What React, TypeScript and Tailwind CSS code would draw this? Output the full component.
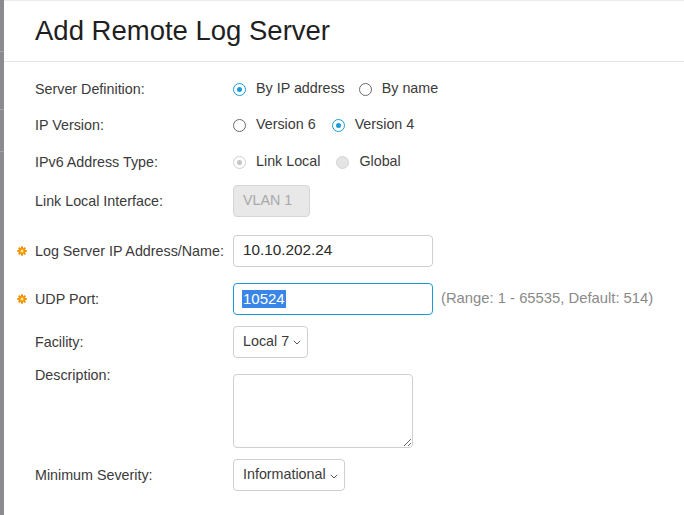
import React from 'react';

const font = { fontFamily: '"Liberation Sans", Arial, sans-serif' };

function Star() {
    return (
        <svg width="10" height="10" viewBox="0 0 10 10" className="block">
            {[0, 45, 90, 135].map(a => (
                <rect key={a} x="4" y="0.2" width="2" height="9.6" rx="0.8" fill="#f08400" transform={`rotate(${a} 5 5)`} />
            ))}
            <circle cx="5" cy="5" r="3.3" fill="#f59a00" />
            <circle cx="5" cy="5" r="1.6" fill="#ffe08a" />
        </svg>
    );
}

function Radio({ checked, disabled, label }: { checked?: boolean; disabled?: boolean; label: string }) {
    const ring = disabled
        ? checked ? 'border-[#cfcfcf] bg-white' : 'border-[#d4d4d4] bg-[#e4e4e4]'
        : checked ? 'border-[#1b9ad6] bg-white' : 'border-[#6b6b6b] bg-white';
    const dot = disabled ? 'bg-[#c4c4c4]' : 'bg-[#1b9ad6]';
    return (
        <div className="flex items-center">
            <div className={`w-[13px] h-[13px] rounded-full border flex items-center justify-center ${ring}`}>
                {checked && <div className={`w-[5px] h-[5px] rounded-full ${dot}`} />}
            </div>
            <span className="ml-[10px] text-[14.3px] text-[#3a3a3a]">{label}</span>
        </div>
    );
}

function Chevron() {
    return (
        <svg width="8" height="5" viewBox="0 0 8 5" className="ml-[4px] mt-[2px]">
            <polyline points="0.8,0.8 4,4 7.2,0.8" fill="none" stroke="#555" strokeWidth="1" />
        </svg>
    );
}

function Row({ label, required, className = '', top, children }: { label: string; required?: boolean; className?: string; top?: boolean; children?: React.ReactNode }) {
    return (
        <div className={`flex ${top ? 'items-start' : 'items-center'} ${className}`}>
            <div className="w-[216px] flex items-center shrink-0 leading-5">
                <div className="w-[18px] flex items-center">{required && <Star />}</div>
                <span className="text-[14.3px] text-[#3a3a3a]">{label}</span>
            </div>
            {children}
        </div>
    );
}

export default function App() {
    return (
        <div className="w-[684px] h-[515px] flex bg-white overflow-hidden" style={font}>
            {/* side strip */}
            <div className="w-[4px] bg-[#8a8a8f] flex flex-col shrink-0">
                <div className="h-[52px] border-b border-[#a4a4a8]" />
                <div className="h-[58px] border-b border-[#a4a4a8]" />
                <div className="h-[42px] border-b border-[#a4a4a8]" />
            </div>

            <div className="flex-1 border-t border-[#ececec]">
                {/* header */}
                <div className="h-[61px] flex items-center border-b border-[#e4e4e4] pl-[31px]">
                    <h1 className="text-[27.5px] text-[#1f1f1f] font-normal">Add Remote Log Server</h1>
                </div>

                <div className="pl-[13px] pt-[10px]">
                    <Row label="Server Definition:" className="h-[34px]">
                        <div className="flex items-center gap-[14px]">
                            <Radio checked label="By IP address" />
                            <Radio label="By name" />
                        </div>
                    </Row>
                    <Row label="IP Version:" className="h-[38px]">
                        <div className="flex items-center gap-[16px]">
                            <Radio label="Version 6" />
                            <Radio checked label="Version 4" />
                        </div>
                    </Row>
                    <Row label="IPv6 Address Type:" className="h-[36px]">
                        <div className="flex items-center gap-[16px]">
                            <Radio checked disabled label="Link Local" />
                            <Radio disabled label="Global" />
                        </div>
                    </Row>
                    <Row label="Link Local Interface:" className="h-[42px]">
                        <div className="w-[77px] h-[32px] rounded-[4px] border border-[#d6d6d6] bg-[#e8e8e8] flex items-center pl-[9px] text-[14.3px] text-[#a9a9a9]">
                            VLAN 1
                        </div>
                    </Row>
                    <Row label="Log Server IP Address/Name:" required className="h-[57px]">
                        <div className="w-[200px] h-[32px] rounded-[4px] border border-[#cfcfcf] flex items-center pl-[9px] text-[15.3px] text-[#2a2a2a]">
                            10.10.202.24
                        </div>
                    </Row>
                    <Row label="UDP Port:" required className="h-[39px]">
                        <div className="w-[200px] h-[32px] rounded-[4px] border border-[#1b9ad6] flex items-center pl-[8px] text-[15px]">
                            <span className="bg-[#3a86e8] text-white leading-[18px] px-[1px]">10524</span>
                        </div>
                        <span className="ml-[8px] text-[14.8px] text-[#8a8a8a]">(Range: 1 - 65535, Default: 514)</span>
                    </Row>
                    <Row label="Facility:" className="h-[47px]">
                        <div className="h-[32px] rounded-[4px] border border-[#cfcfcf] flex items-center pl-[9px] pr-[6px] text-[14.3px] text-[#3a3a3a]">
                            Local 7<Chevron />
                        </div>
                    </Row>
                    <Row label="Description:" top>
                        <textarea
                            className="mt-[9px] w-[180px] h-[74px] rounded-[4px] border border-[#cfcfcf] outline-none"
                            defaultValue=""
                        />
                    </Row>
                    <Row label="Minimum Severity:" className="mt-[11px] h-[32px]">
                        <div className="h-[32px] rounded-[4px] border border-[#cfcfcf] flex items-center pl-[9px] pr-[6px] text-[14.3px] text-[#3a3a3a]">
                            Informational<Chevron />
                        </div>
                    </Row>
                </div>
            </div>
        </div>
    );
}
